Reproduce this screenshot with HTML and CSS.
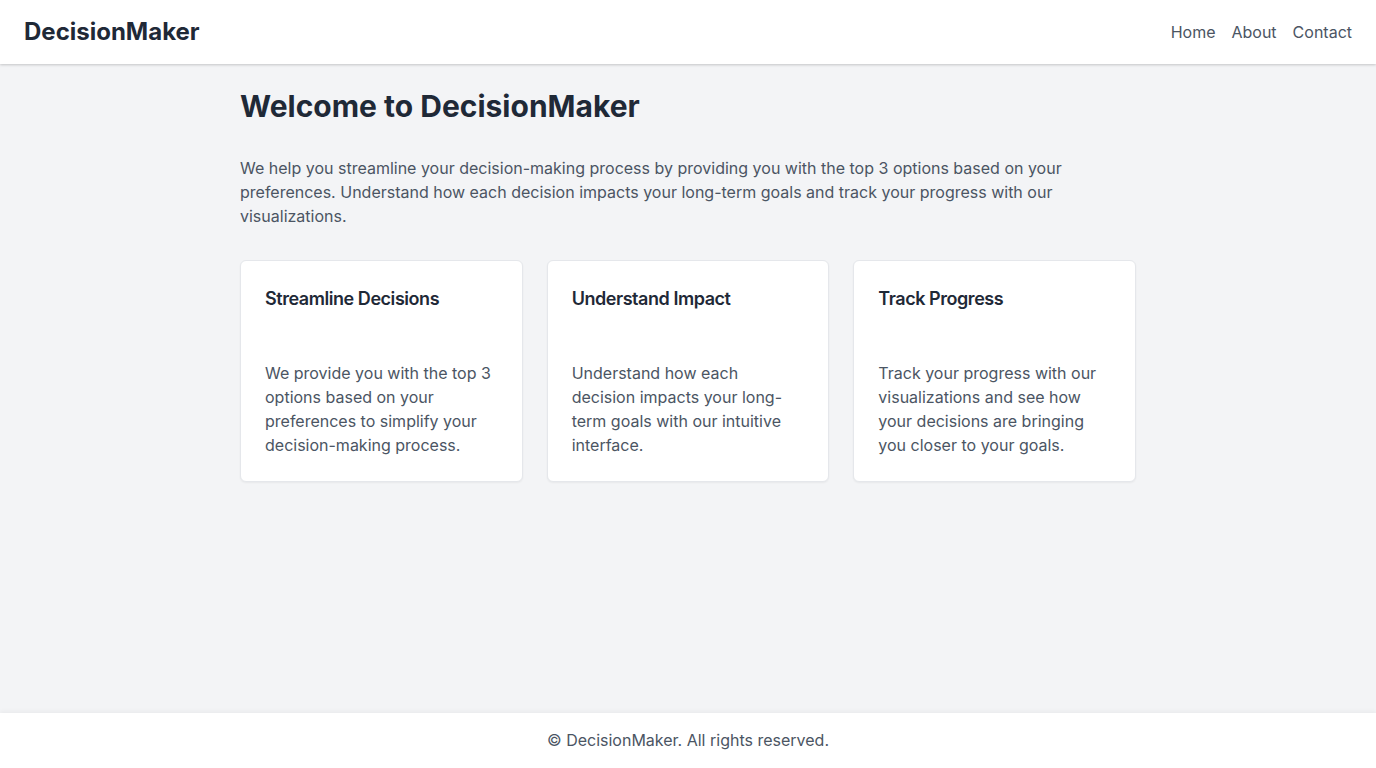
FILE: index.html
```html
<!DOCTYPE html>
<html lang="en">
<head>
<meta charset="utf-8">
<title>DecisionMaker</title>
<link rel="stylesheet" href="styles.css">
</head>
<body>
<header class="site-header">
  <div class="logo">DecisionMaker</div>
  <nav class="nav">
    <a href="#">Home</a>
    <a href="#">About</a>
    <a href="#">Contact</a>
  </nav>
</header>
<main class="main">
  <div class="container">
    <h1 class="title">Welcome to DecisionMaker</h1>
    <p class="intro">We help you streamline your decision-making process by providing you with the top 3 options based on your preferences. Understand how each decision impacts your long-term goals and track your progress with our visualizations.</p>
    <div class="cards">
      <div class="card">
        <h2 class="card-title">Streamline Decisions</h2>
        <p class="card-text">We provide you with the top 3 options based on your preferences to simplify your decision-making process.</p>
      </div>
      <div class="card">
        <h2 class="card-title">Understand Impact</h2>
        <p class="card-text">Understand how each decision impacts your long-term goals with our intuitive interface.</p>
      </div>
      <div class="card">
        <h2 class="card-title">Track Progress</h2>
        <p class="card-text">Track your progress with our visualizations and see how your decisions are bringing you closer to your goals.</p>
      </div>
    </div>
  </div>
</main>
<footer class="site-footer">© DecisionMaker. All rights reserved.</footer>
</body>
</html>
```
FILE: styles.css
```css
* { box-sizing: border-box; }
html, body { margin: 0; padding: 0; }
body {
  font-family: Inter, "Noto Sans", sans-serif;
  background: #f3f4f6;
  color: #1f2937;
  min-height: 100vh;
  display: flex;
  flex-direction: column;
}
.site-header {
  background: #fff;
  height: 64px;
  padding: 0 24px;
  display: flex;
  align-items: center;
  justify-content: space-between;
  box-shadow: 0 1px 3px rgba(0,0,0,0.12), 0 1px 2px rgba(0,0,0,0.08);
  position: relative;
  z-index: 1;
}
.logo {
  font-size: 24px;
  line-height: 32px;
  font-weight: 700;
  color: #1f2937;
}
.nav { display: flex; gap: 16px; }
.nav a {
  color: #4b5563;
  text-decoration: none;
  font-size: 16px;
  line-height: 24px;
}
.main { flex: 1; padding-top: 24px; }
.container { max-width: 896px; margin: 0 auto; }
.title {
  margin: 0 0 32px;
  font-size: 30px;
  line-height: 36px;
  font-weight: 700;
  color: #1f2937;
}
.intro {
  margin: 0 0 32px;
  font-size: 16px;
  line-height: 24px;
  color: #4b5563;
}
.cards {
  display: grid;
  grid-template-columns: repeat(3, 1fr);
  gap: 24px;
}
.card {
  background: #fff;
  border: 1px solid #e5e7eb;
  border-radius: 6px;
  padding: 24px;
  box-shadow: 0 1px 2px rgba(0,0,0,0.05);
}
.card-title {
  margin: 0 0 48px;
  font-size: 18px;
  line-height: 28px;
  font-weight: 600;
  letter-spacing: -0.025em;
  color: #1f2937;
}
.card-text {
  margin: 0;
  font-size: 16px;
  line-height: 24px;
  color: #4b5563;
}
.site-footer {
  background: #fff;
  padding: 15px 0 16px;
  text-align: center;
  font-size: 16px;
  line-height: 24px;
  color: #4b5563;
  box-shadow: 0 -2px 4px rgba(0,0,0,0.04);
}
```
